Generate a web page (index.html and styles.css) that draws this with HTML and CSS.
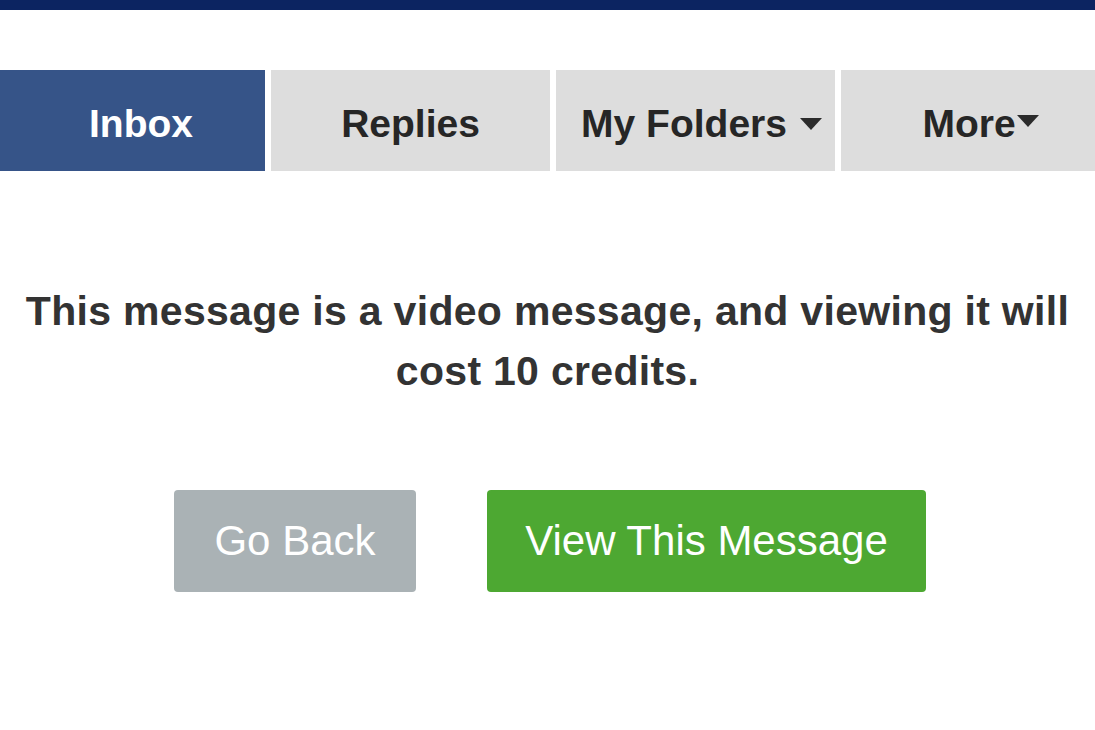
FILE: index.html
```html
<!DOCTYPE html>
<html>
<head>
<meta charset="utf-8">
<link rel="stylesheet" href="styles.css">
</head>
<body>
<div class="topbar"></div>
<nav class="tabs">
  <a class="tab tab-inbox active">Inbox</a>
  <a class="tab">Replies</a>
  <a class="tab tab-folders">My Folders<span class="caret"></span></a>
  <a class="tab tab-more">More<span class="caret"></span></a>
</nav>
<main class="content">
  <p class="notice">This message is a video message, and viewing it will cost 10 credits.</p>
  <div class="actions">
    <a class="btn btn-back">Go Back</a>
    <a class="btn btn-view">View This Message</a>
  </div>
</main>
</body>
</html>
```
FILE: styles.css
```css
html, body {
  margin: 0;
  padding: 0;
  background: #ffffff;
  font-family: "Liberation Sans", Arial, Helvetica, sans-serif;
  overflow: hidden;
}
.topbar {
  height: 10px;
  background: #0c2461;
}
.tabs {
  display: flex;
  gap: 6px;
  margin-top: 60px;
  height: 101px;
  overflow: hidden;
  width: 1095px;
}
.tab {
  flex: 0 0 279px;
  display: flex;
  align-items: center;
  justify-content: center;
  padding-top: 6px;
  box-sizing: border-box;
  background: #dddddd;
  color: #262626;
  font-weight: bold;
  font-size: 39px;
  text-decoration: none;
  white-space: nowrap;
}
.tab-inbox {
  flex-basis: 265px;
  padding-left: 17px;
}
.tab.active {
  background: #365488;
  color: #ffffff;
}
.tab-folders {
  padding-left: 12px;
}
.caret {
  display: inline-block;
  width: 0;
  height: 0;
  border-left: 11px solid transparent;
  border-right: 11px solid transparent;
  border-top: 12px solid #2b2b2b;
  margin-left: 13px;
  margin-top: 0;
}
.tab-more .caret {
  margin-left: 1px;
  margin-top: -5px;
}
.content {
  padding: 0;
}
.notice {
  margin: 110px 0 0;
  text-align: center;
  font-weight: bold;
  font-size: 41px;
  letter-spacing: 0.3px;
  line-height: 60px;
  color: #333333;
  padding: 0 16px;
}
.actions {
  display: flex;
  justify-content: center;
  gap: 71px;
  margin-top: 89px;
  padding-left: 5px;
}
.btn {
  display: flex;
  align-items: center;
  justify-content: center;
  height: 102px;
  border-radius: 4px;
  color: #ffffff;
  font-size: 42px;
  text-decoration: none;
  box-sizing: border-box;
}
.btn-back {
  width: 242px;
  background: #aab2b5;
}
.btn-view {
  width: 439px;
  background: #4da832;
}
```
